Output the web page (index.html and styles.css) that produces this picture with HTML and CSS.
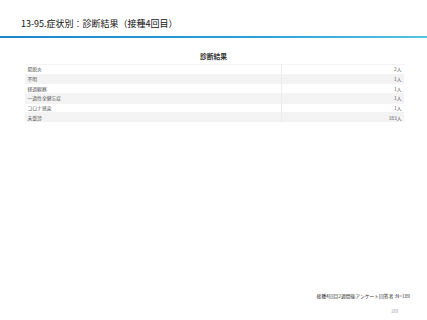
FILE: index.html
```html
<!DOCTYPE html>
<html lang="ja">
<head>
<meta charset="utf-8">
<link rel="stylesheet" href="styles.css">
</head>
<body>
<div class="page">
  <header class="title-bar">
    <h1 class="title">13-95.症状別：診断結果（接種4回目）</h1>
  </header>
  <div class="rule"></div>
  <section class="content">
    <h2 class="table-title">診断結果</h2>
    <table class="data">
      <tr><td class="label">腸脱炎</td><td class="value">2人</td></tr>
      <tr class="alt"><td class="label">不明</td><td class="value">1人</td></tr>
      <tr><td class="label">経過観察</td><td class="value">1人</td></tr>
      <tr class="alt"><td class="label">一過性全健忘症</td><td class="value">1人</td></tr>
      <tr><td class="label">コロナ感染</td><td class="value">1人</td></tr>
      <tr class="alt"><td class="label">未受診</td><td class="value">183人</td></tr>
    </table>
  </section>
  <footer class="foot">
    <div class="note">接種4回目2週間後アンケート回答者 :N=189</div>
    <div class="pageno">189</div>
  </footer>
</div>
</body>
</html>
```
FILE: styles.css
```css
html, body {
  margin: 0;
  padding: 0;
  background: #fff;
}
.page {
  width: 427px;
  height: 320px;
  display: flex;
  flex-direction: column;
  font-family: "Noto Sans CJK JP", "Noto Sans", sans-serif;
  color: #222;
}
.title-bar {
  height: 36px;
  display: flex;
  align-items: center;
  padding-left: 21px;
  padding-top: 12px;
  box-sizing: border-box;
}
.title {
  margin: 0;
  font-size: 9px;
  font-weight: 400;
  color: #111;
  line-height: 12px;
}
.rule {
  height: 2px;
  background: linear-gradient(to right, #1a86cc, #2aa2d8 60%, #55c4e2);
}
.content {
  display: flex;
  flex-direction: column;
  align-items: center;
  padding-top: 14px;
}
.table-title {
  margin: 0 0 3px 0;
  font-size: 6.8px;
  font-weight: 700;
  color: #333;
  line-height: 9px;
}
.data {
  width: 379px;
  margin-left: 1px;
  border-collapse: collapse;
  font-size: 4.8px;
  color: #555;
}
.data tr {
  height: 9.67px;
  background: #fff;
}
.data tr.alt {
  background: #f3f3f3;
}
.data td {
  padding: 0 2px 0 3px;
  border-top: 1px solid #f4f4f4;
  line-height: 8px;
}
.data td.label {
  width: 251px;
  border-right: 1px solid #ececec;
}
.data td.value {
  text-align: right;
}
.foot {
  margin-top: auto;
  display: flex;
  flex-direction: column;
  align-items: flex-end;
  padding-bottom: 6px;
}
.note {
  font-size: 4.8px;
  color: #333;
  margin-right: 17px;
  line-height: 8px;
}
.pageno {
  margin-top: 8px;
  font-size: 4.2px;
  color: #999;
  margin-right: 29px;
  line-height: 6px;
}
```
